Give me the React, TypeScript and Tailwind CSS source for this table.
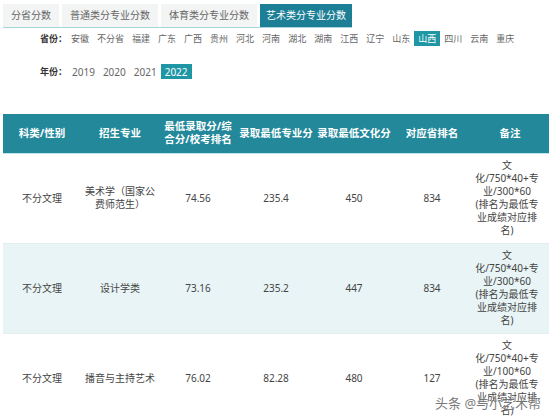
const tabs = ["分省分数", "普通类分专业分数", "体育类分专业分数", "艺术类分专业分数"];
const provinces = ["安徽", "不分省", "福建", "广东", "广西", "贵州", "河北", "河南", "湖北", "湖南", "江西", "辽宁", "山东", "山西", "四川", "云南", "重庆"];
const years = ["2019", "2020", "2021", "2022"];

const rows = [
  {
    type: "不分文理",
    major: ["美术学（国家公", "费师范生）"],
    low: "74.56",
    pro: "235.4",
    cul: "450",
    rank: "834",
    note: ["文", "化/750*40+专", "业/300*60", "(排名为最低专", "业成绩对应排", "名)"],
  },
  {
    type: "不分文理",
    major: ["设计学类"],
    low: "73.16",
    pro: "235.2",
    cul: "447",
    rank: "834",
    note: ["文", "化/750*40+专", "业/300*60", "(排名为最低专", "业成绩对应排", "名)"],
  },
  {
    type: "不分文理",
    major: ["播音与主持艺术"],
    low: "76.02",
    pro: "82.28",
    cul: "480",
    rank: "127",
    note: ["文", "化/750*40+专", "业/100*60", "(排名为最低专", "业成绩对应排", "名)"],
  },
];

const App = () => {
  return (
    <div
      className="relative w-[549px] h-[418px] overflow-hidden bg-white"
      style={{ fontFamily: '"Noto Sans", "Noto Sans CJK SC", sans-serif' }}
    >
      {/* tabs */}
      <div className="pt-[1px] pl-[3px]">
        <div className="inline-flex gap-[3px] border-b border-[#a6d6dc]">
          {tabs.map((t, i) => (
            <div
              key={t}
              className={
                i === 3
                  ? "h-[23px] px-[6px] flex items-center text-[10px] text-white bg-[#1d7f95]"
                  : "h-[23px] px-[8px] flex items-center text-[10px] text-[#666] bg-[#f3f4f4]"
              }
            >
              {t}
            </div>
          ))}
        </div>
      </div>

      {/* province */}
      <div className="mt-[3px] pl-[40px] flex items-center h-[15px] text-[9px] leading-none">
        <span className="font-bold text-[#333] w-[27px]">省份：</span>
        {provinces.map((p) => (
          <span
            key={p}
            className={
              p === "山西"
                ? "h-[15px] px-[4px] flex items-center bg-[#1f96a4] text-white"
                : "h-[15px] px-[4px] flex items-center text-[#666]"
            }
          >
            {p}
          </span>
        ))}
      </div>

      {/* year */}
      <div className="mt-[18px] pl-[40px] flex items-center h-[15px] text-[9px] leading-none">
        <span className="font-bold text-[#333] w-[28px]">年份：</span>
        {years.map((y) => (
          <span
            key={y}
            className={
              y === "2022"
                ? "h-[15px] px-[4px] flex items-center bg-[#1f96a4] text-white text-[10px]"
                : "h-[15px] px-[4px] flex items-center text-[#666] text-[10px]"
            }
          >
            {y}
          </span>
        ))}
      </div>

      {/* table */}
      <table className="mt-[35px] ml-[3px] w-[546px] table-fixed border-collapse text-center">
        <thead>
          <tr className="h-[39px] bg-[#22889a] text-white text-[10.5px] font-bold leading-[13px]">
            <th className="w-[78px] p-0">科类/性别</th>
            <th className="w-[78px] p-0">招生专业</th>
            <th className="w-[78px] p-0">
              最低录取分/综
              <br />
              合分/校考排名
            </th>
            <th className="w-[78px] p-0">录取最低专业分</th>
            <th className="w-[78px] p-0">录取最低文化分</th>
            <th className="w-[78px] p-0">对应省排名</th>
            <th className="w-[78px] p-0">备注</th>
          </tr>
        </thead>
        <tbody className="text-[10px] leading-[13px] text-[#444]">
          {rows.map((r, i) => (
            <tr
              key={i}
              className={
                i === 1
                  ? "h-[90px] bg-[#e8f4f5] border-t border-[#e3eeef]"
                  : i === 0
                  ? "h-[90px] bg-white border-t border-[#b9e6ec]"
                  : "h-[90px] bg-white border-t border-[#e3eeef]"
              }
            >
              <td className="p-0">{r.type}</td>
              <td className="p-0">
                {r.major.map((m) => (
                  <div key={m}>{m}</div>
                ))}
              </td>
              <td className="p-0">{r.low}</td>
              <td className="p-0">{r.pro}</td>
              <td className="p-0">{r.cul}</td>
              <td className="p-0">{r.rank}</td>
              <td className="p-0 pr-[6px]">
                {r.note.map((n) => (
                  <div key={n}>{n}</div>
                ))}
              </td>
            </tr>
          ))}
        </tbody>
      </table>

      {/* watermark */}
      <div
        className="absolute left-[435px] top-[394px] text-[13px] text-[#555]/80 whitespace-nowrap"
        style={{ textShadow: "0 0 2px #fff" }}
      >
        头条 @与小艺术帮
      </div>
    </div>
  );
};

export default App;
